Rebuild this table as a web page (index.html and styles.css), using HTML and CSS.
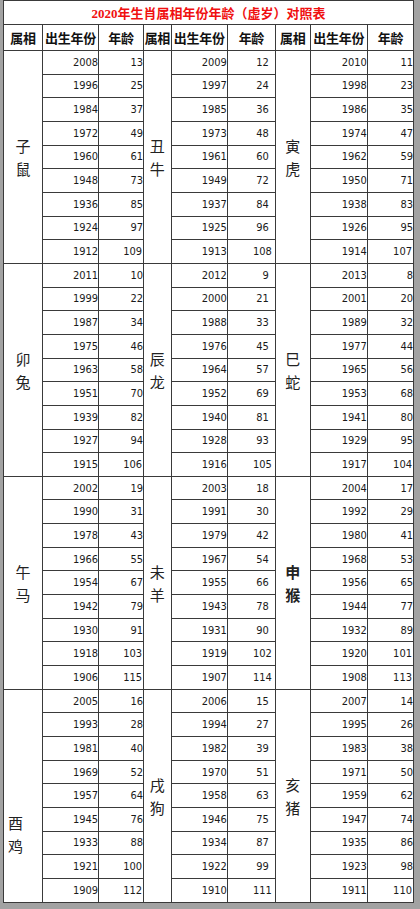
FILE: index.html
```html
<!DOCTYPE html>
<html lang="zh-CN">
<head>
<meta charset="utf-8">
<title>2020年生肖属相年份年龄（虚岁）对照表</title>
<link rel="stylesheet" href="styles.css">
</head>
<body>
<div class="frame">
<table class="sheet">
<colgroup>
<col class="k1"><col class="k2"><col class="k3"><col class="k4"><col class="k5"><col class="k6"><col class="k7"><col class="k8"><col class="k9">
</colgroup>
<tbody>
<tr class="title-row"><td class="title" colspan="9">2020年生肖属相年份年龄（虚岁）对照表</td></tr>
<tr class="head-row"><th>属相</th><th>出生年份</th><th>年龄</th><th>属相</th><th>出生年份</th><th>年龄</th><th>属相</th><th>出生年份</th><th>年龄</th></tr>

<tr class="g"><td class="z" rowspan="9">子<br>鼠</td><td class="y">2008</td><td class="a">13</td><td class="z" rowspan="9">丑<br>牛</td><td class="y">2009</td><td class="a m">12</td><td class="z" rowspan="9">寅<br>虎</td><td class="y">2010</td><td class="a">11</td></tr>
<tr><td class="y">1996</td><td class="a">25</td><td class="y">1997</td><td class="a m">24</td><td class="y">1998</td><td class="a">23</td></tr>
<tr><td class="y">1984</td><td class="a">37</td><td class="y">1985</td><td class="a m">36</td><td class="y">1986</td><td class="a">35</td></tr>
<tr><td class="y">1972</td><td class="a">49</td><td class="y">1973</td><td class="a m">48</td><td class="y">1974</td><td class="a">47</td></tr>
<tr><td class="y">1960</td><td class="a">61</td><td class="y">1961</td><td class="a m">60</td><td class="y">1962</td><td class="a">59</td></tr>
<tr><td class="y">1948</td><td class="a">73</td><td class="y">1949</td><td class="a m">72</td><td class="y">1950</td><td class="a">71</td></tr>
<tr><td class="y">1936</td><td class="a">85</td><td class="y">1937</td><td class="a m">84</td><td class="y">1938</td><td class="a">83</td></tr>
<tr><td class="y">1924</td><td class="a">97</td><td class="y">1925</td><td class="a m">96</td><td class="y">1926</td><td class="a">95</td></tr>
<tr><td class="y">1912</td><td class="a w">109</td><td class="y">1913</td><td class="a m w">108</td><td class="y">1914</td><td class="a w">107</td></tr>

<tr class="g"><td class="z" rowspan="9">卯<br>兔</td><td class="y">2011</td><td class="a">10</td><td class="z" rowspan="9">辰<br>龙</td><td class="y">2012</td><td class="a m">9</td><td class="z" rowspan="9">巳<br>蛇</td><td class="y">2013</td><td class="a">8</td></tr>
<tr><td class="y">1999</td><td class="a">22</td><td class="y">2000</td><td class="a m">21</td><td class="y">2001</td><td class="a">20</td></tr>
<tr><td class="y">1987</td><td class="a">34</td><td class="y">1988</td><td class="a m">33</td><td class="y">1989</td><td class="a">32</td></tr>
<tr><td class="y">1975</td><td class="a">46</td><td class="y">1976</td><td class="a m">45</td><td class="y">1977</td><td class="a">44</td></tr>
<tr><td class="y">1963</td><td class="a">58</td><td class="y">1964</td><td class="a m">57</td><td class="y">1965</td><td class="a">56</td></tr>
<tr><td class="y">1951</td><td class="a">70</td><td class="y">1952</td><td class="a m">69</td><td class="y">1953</td><td class="a">68</td></tr>
<tr><td class="y">1939</td><td class="a">82</td><td class="y">1940</td><td class="a m">81</td><td class="y">1941</td><td class="a">80</td></tr>
<tr><td class="y">1927</td><td class="a">94</td><td class="y">1928</td><td class="a m">93</td><td class="y">1929</td><td class="a">95</td></tr>
<tr><td class="y">1915</td><td class="a w">106</td><td class="y">1916</td><td class="a m w">105</td><td class="y">1917</td><td class="a w">104</td></tr>

<tr class="g"><td class="z" rowspan="9">午<br>马</td><td class="y">2002</td><td class="a">19</td><td class="z" rowspan="9">未<br>羊</td><td class="y">2003</td><td class="a m">18</td><td class="z strong" rowspan="9">申<br>猴</td><td class="y">2004</td><td class="a">17</td></tr>
<tr><td class="y">1990</td><td class="a">31</td><td class="y">1991</td><td class="a m">30</td><td class="y">1992</td><td class="a">29</td></tr>
<tr><td class="y">1978</td><td class="a">43</td><td class="y">1979</td><td class="a m">42</td><td class="y">1980</td><td class="a">41</td></tr>
<tr><td class="y">1966</td><td class="a">55</td><td class="y">1967</td><td class="a m">54</td><td class="y">1968</td><td class="a">53</td></tr>
<tr><td class="y">1954</td><td class="a">67</td><td class="y">1955</td><td class="a m">66</td><td class="y">1956</td><td class="a">65</td></tr>
<tr><td class="y">1942</td><td class="a">79</td><td class="y">1943</td><td class="a m">78</td><td class="y">1944</td><td class="a">77</td></tr>
<tr><td class="y">1930</td><td class="a">91</td><td class="y">1931</td><td class="a m">90</td><td class="y">1932</td><td class="a">89</td></tr>
<tr><td class="y">1918</td><td class="a w">103</td><td class="y">1919</td><td class="a m w">102</td><td class="y">1920</td><td class="a w">101</td></tr>
<tr><td class="y">1906</td><td class="a w">115</td><td class="y">1907</td><td class="a m w">114</td><td class="y">1908</td><td class="a w">113</td></tr>

<tr class="g"><td class="z low" rowspan="9">酉<br>鸡</td><td class="y">2005</td><td class="a">16</td><td class="z" rowspan="9">戌<br>狗</td><td class="y">2006</td><td class="a m">15</td><td class="z" rowspan="9">亥<br>猪</td><td class="y">2007</td><td class="a">14</td></tr>
<tr><td class="y">1993</td><td class="a">28</td><td class="y">1994</td><td class="a m">27</td><td class="y">1995</td><td class="a">26</td></tr>
<tr><td class="y">1981</td><td class="a">40</td><td class="y">1982</td><td class="a m">39</td><td class="y">1983</td><td class="a">38</td></tr>
<tr><td class="y">1969</td><td class="a">52</td><td class="y">1970</td><td class="a m">51</td><td class="y">1971</td><td class="a">50</td></tr>
<tr><td class="y">1957</td><td class="a">64</td><td class="y">1958</td><td class="a m">63</td><td class="y">1959</td><td class="a">62</td></tr>
<tr><td class="y">1945</td><td class="a">76</td><td class="y">1946</td><td class="a m">75</td><td class="y">1947</td><td class="a">74</td></tr>
<tr><td class="y">1933</td><td class="a">88</td><td class="y">1934</td><td class="a m">87</td><td class="y">1935</td><td class="a">86</td></tr>
<tr><td class="y">1921</td><td class="a w">100</td><td class="y">1922</td><td class="a m">99</td><td class="y">1923</td><td class="a">98</td></tr>
<tr><td class="y">1909</td><td class="a w">112</td><td class="y">1910</td><td class="a m w">111</td><td class="y">1911</td><td class="a w">110</td></tr>
</tbody>
</table>
</div>
</body>
</html>
```

FILE: styles.css
```css
html, body {
  margin: 0;
  padding: 0;
  background: #a2a2a2;
}

.frame {
  padding: 0 0 0 3px;
}

.sheet {
  border-collapse: collapse;
  table-layout: fixed;
  width: 411px;
  background: #ffffff;
  border: 1px solid #3a3a3a;
  border-top-color: #c4c4c4;
}

.k1 { width: 38px; }
.k2 { width: 55px; }
.k3 { width: 44px; }
.k4 { width: 27px; }
.k5 { width: 55px; }
.k6 { width: 47px; }
.k7 { width: 34px; }
.k8 { width: 56px; }
.k9 { width: 45px; }

.sheet td,
.sheet th {
  border: 1px solid #3a3a3a;
  padding: 0;
  overflow: visible;
  white-space: nowrap;
}

.title-row { height: 24px; }
.head-row { height: 26px; }
.sheet tr:not(.title-row):not(.head-row) { height: 23.66px; }

.title {
  color: #f01010;
  font-family: "Liberation Serif", "Noto Sans CJK SC", serif;
  font-weight: 700;
  font-size: 13px;
  text-align: center;
  padding-left: 26px;
  border-top-color: #c4c4c4;
}

.head-row th {
  font-family: "Liberation Serif", "Noto Sans CJK SC", serif;
  font-weight: 700;
  font-size: 13px;
  color: #111;
  text-align: center;
  letter-spacing: -0.3px;
}

.y, .a {
  font-family: "DejaVu Sans Condensed", "Liberation Sans", sans-serif;
  font-size: 11px;
  color: #1a1a1a;
  text-align: right;
}

.y { padding-right: 4px; }
.a { padding-right: 4px; }
.a.m { padding-right: 6px; }
.a.w { padding-right: 1px; }
.a.m.w { padding-right: 3px; }

.z {
  font-family: "Noto Sans CJK SC", sans-serif;
  font-size: 15px;
  line-height: 23px;
  color: #222;
  text-align: center;
  vertical-align: middle;
}

.z.strong { font-weight: 700; }

.z.low {
  text-align: left;
  padding-left: 4px;
  padding-top: 76px;
}
```
